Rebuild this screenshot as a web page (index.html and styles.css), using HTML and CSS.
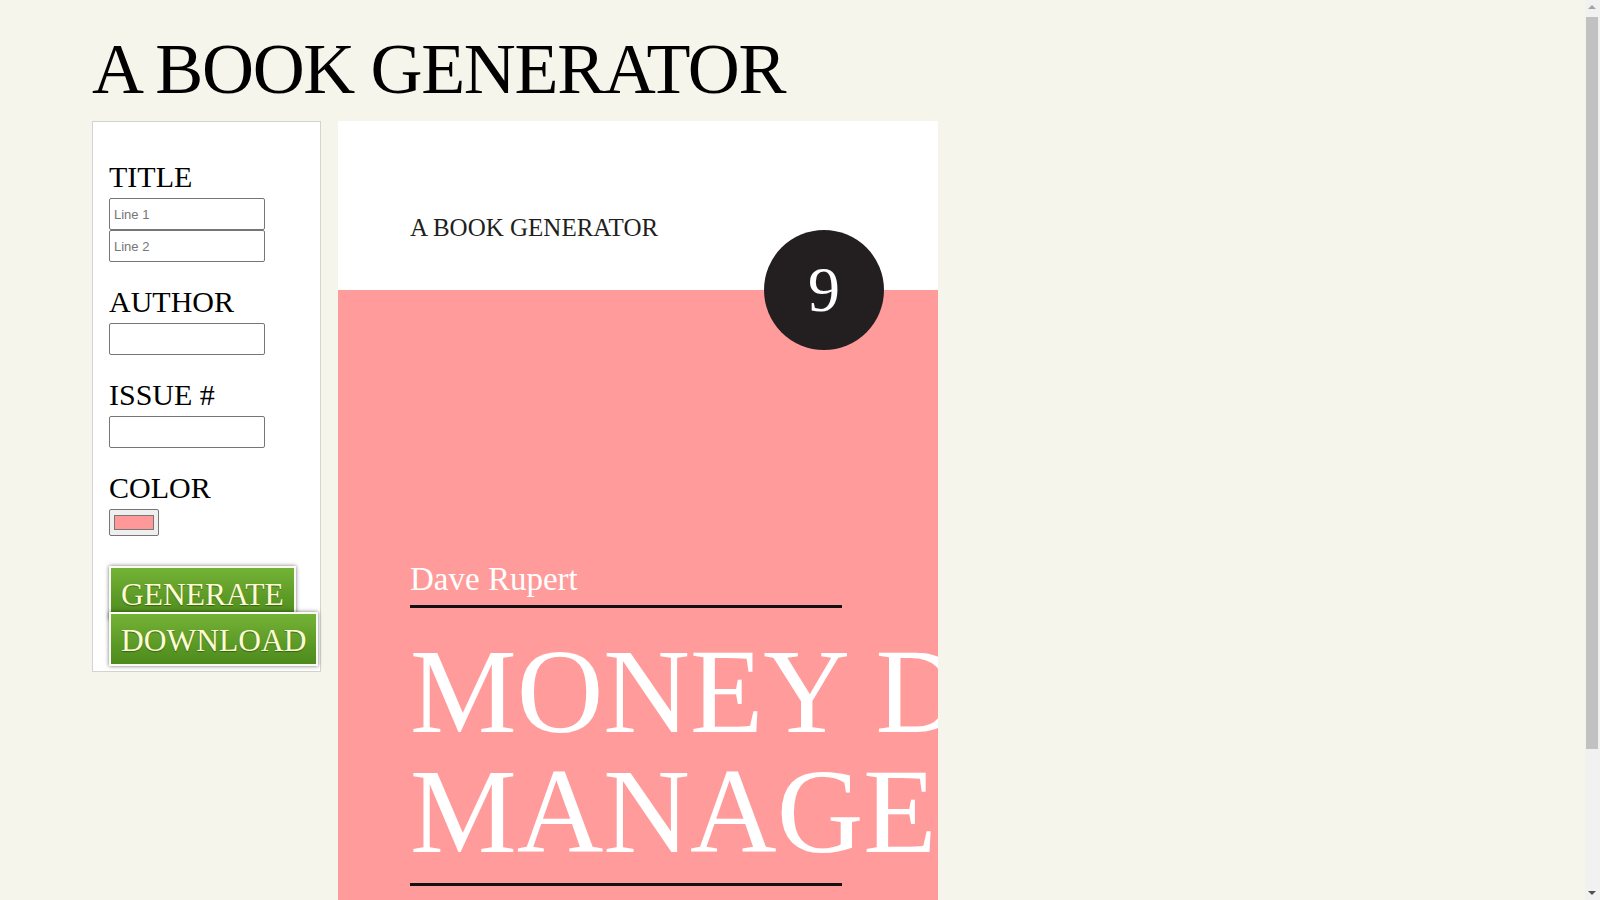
FILE: index.html
```html
<!DOCTYPE html>
<html lang="en">
<head>
<meta charset="utf-8">
<title>A Book Generator</title>
<link rel="stylesheet" href="styles.css">
</head>
<body>
<div class="page">
  <h1 class="page-title">A BOOK GENERATOR</h1>
  <div class="workspace">
    <form class="panel">
      <div class="group">
        <label class="label">TITLE</label>
        <div class="fields">
          <input class="text-input" type="text" placeholder="Line 1">
          <input class="text-input" type="text" placeholder="Line 2">
        </div>
      </div>
      <div class="group">
        <label class="label">AUTHOR</label>
        <div class="fields">
          <input class="text-input" type="text">
        </div>
      </div>
      <div class="group">
        <label class="label">ISSUE #</label>
        <div class="fields">
          <input class="text-input" type="text">
        </div>
      </div>
      <div class="group">
        <label class="label">COLOR</label>
        <div class="fields">
          <input class="color-input" type="color" value="#ff9999">
        </div>
      </div>
      <div class="actions">
        <button class="btn" type="button">GENERATE</button>
        <button class="btn btn-second" type="button">DOWNLOAD</button>
      </div>
    </form>

    <div class="cover">
      <div class="cover-head">A BOOK GENERATOR</div>
      <div class="cover-body">
        <div class="issue">9</div>
        <div class="cover-author">Dave Rupert</div>
        <div class="cover-title">
          <div class="title-line">MONEY DEBT</div>
          <div class="title-line">MANAGEMENT</div>
        </div>
      </div>
    </div>
  </div>
</div>

<div class="scrollbar" aria-hidden="true">
  <div class="sb-arrow sb-up"></div>
  <div class="sb-thumb"></div>
  <div class="sb-arrow sb-down"></div>
</div>
</body>
</html>
```

FILE: styles.css
```css
html, body {
  margin: 0;
  padding: 0;
}

body {
  background: #f5f5eb;
  font-family: "Liberation Serif", "Times New Roman", serif;
  color: #000;
}

.page {
  padding: 33px 0 8px 92px;
}

.page-title {
  margin: 0 0 16px 0;
  font-size: 72px;
  line-height: 72px;
  font-weight: normal;
  letter-spacing: -1.35px;
  white-space: nowrap;
}

.workspace {
  display: flex;
  align-items: flex-start;
  gap: 17px;
}

/* ---------- form panel ---------- */
.panel {
  width: 229px;
  box-sizing: border-box;
  background: #fff;
  border: 1px solid #d4d4cc;
  padding: 15px 16px 5px 16px;
  margin: 0;
}

.group {
  margin-top: 23px;
}

.label {
  display: block;
  font-size: 30px;
  line-height: 33px;
}

.fields {
  margin-top: 5px;
}

.text-input {
  display: block;
  box-sizing: border-box;
  width: 156px;
  height: 32px;
  margin: 0;
  padding: 0 4px;
  border: 1px solid #767676;
  border-radius: 2px;
  background: #fff;
  font-family: "Liberation Sans", Arial, sans-serif;
  font-size: 13px;
  color: #000;
}

.text-input::placeholder {
  color: #757575;
}

.color-input {
  display: block;
  box-sizing: border-box;
  width: 50px;
  height: 27px;
  margin: 0;
  padding: 1px 2px;
  border: 1px solid #767676;
  border-radius: 2px;
  background: #efefef;
}

.actions {
  margin-top: 30px;
  display: flex;
  flex-direction: column;
  align-items: flex-start;
}

.btn {
  box-sizing: border-box;
  height: 54px;
  margin: 0;
  padding: 10px 10px 6px 10px;
  border: 2px solid #fbfbf6;
  border-radius: 0;
  background: linear-gradient(#74b236, #4c8a1c);
  box-shadow: 0 0 4px rgba(0, 0, 0, 0.55);
  font-family: "Liberation Serif", "Times New Roman", serif;
  font-size: 31.5px;
  line-height: 34px;
  color: #fdfbd2;
  text-shadow: 0 1px 1px rgba(0, 0, 0, 0.35);
  white-space: nowrap;
  cursor: pointer;
}

.btn-second {
  margin-top: -8px;
  position: relative;
}

/* ---------- cover ---------- */
.cover {
  position: relative;
  width: 600px;
  height: 935px;
  overflow: hidden;
  background: #ff9b9b;
  flex-shrink: 0;
}

.cover-head {
  box-sizing: border-box;
  height: 169px;
  padding: 93px 0 0 72px;
  background: #fff;
  font-size: 25px;
  line-height: 28px;
  color: #231f20;
}

.cover-body {
  position: relative;
  padding: 269px 0 0 72px;
}

.issue {
  position: absolute;
  top: -60px;
  right: 54px;
  width: 120px;
  height: 120px;
  border-radius: 50%;
  background: #231f20;
  color: #fff;
  font-size: 64px;
  line-height: 120px;
  text-align: center;
}

.cover-author {
  width: 432px;
  padding-bottom: 6px;
  border-bottom: 3px solid #111;
  font-size: 33px;
  line-height: 40px;
  color: #fff;
}

.cover-title {
  width: 432px;
  margin-top: 24px;
  padding-bottom: 11px;
  border-bottom: 3px solid #111;
  color: #fff;
  font-size: 120px;
  line-height: 120px;
}

.title-line {
  white-space: nowrap;
}

/* ---------- window scrollbar (as in the screenshot) ---------- */
.scrollbar {
  position: fixed;
  top: 0;
  right: 0;
  width: 15px;
  height: 100vh;
  background: #f1f1f1;
}

.sb-thumb {
  position: absolute;
  top: 17px;
  left: 1px;
  right: 2px;
  height: 732px;
  background: #c1c1c1;
}

.sb-arrow {
  position: absolute;
  left: 3px;
  width: 0;
  height: 0;
  border-left: 4px solid transparent;
  border-right: 4px solid transparent;
}

.sb-up {
  top: 5px;
  border-bottom: 4px solid #a3a3a3;
}

.sb-down {
  bottom: 5px;
  border-top: 4px solid #505050;
}
```
